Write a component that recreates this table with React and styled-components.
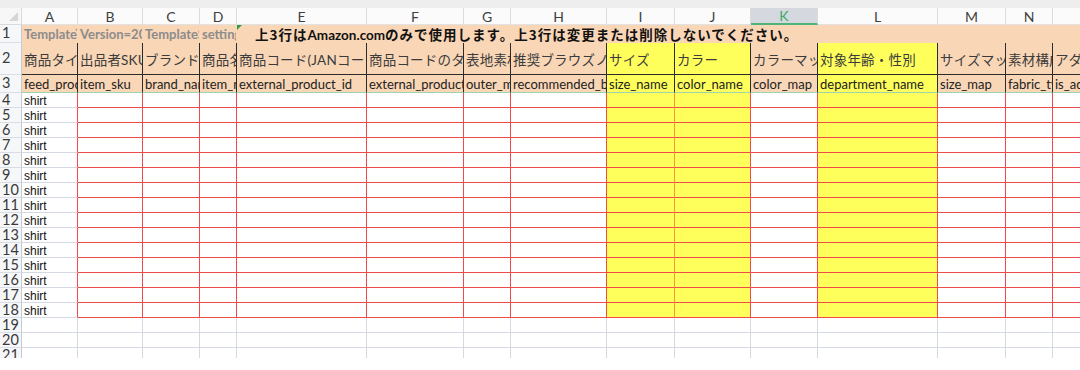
import React from 'react'
import styled, { createGlobalStyle, css } from 'styled-components'

const GlobalStyle = createGlobalStyle`
  html, body {
    margin: 0;
    padding: 0;
    background: #ffffff;
  }
`

const columns = [
  { key: 'A', width: 56, label: '商品タイプ', field: 'feed_product_type' },
  { key: 'B', width: 65, label: '出品者SKU', field: 'item_sku' },
  { key: 'C', width: 57, label: 'ブランド名', field: 'brand_name' },
  { key: 'D', width: 37, label: '商品名', field: 'item_name' },
  { key: 'E', width: 130, label: '商品コード(JANコード等)', field: 'external_product_id' },
  { key: 'F', width: 97, label: '商品コードのタイプ', field: 'external_product_id_type' },
  { key: 'G', width: 47, label: '表地素材', field: 'outer_material_type' },
  { key: 'H', width: 96, label: '推奨ブラウズノード', field: 'recommended_browse_nodes' },
  { key: 'I', width: 68, label: 'サイズ', field: 'size_name', yellow: true },
  { key: 'J', width: 76, label: 'カラー', field: 'color_name', yellow: true },
  { key: 'K', width: 67, label: 'カラーマップ', field: 'color_map' },
  { key: 'L', width: 120, label: '対象年齢・性別', field: 'department_name', yellow: true },
  { key: 'M', width: 68, label: 'サイズマップ', field: 'size_map' },
  { key: 'N', width: 47, label: '素材構成', field: 'fabric_type' },
  { key: 'O', width: 100, label: 'アダルト商品', field: 'is_adult_product' },
]

const metaTexts = [
  'TemplateType=fptcustom',
  'Version=2019.0101',
  'TemplateSignature=U0hJUlQ=',
  'settings=contentLanguageTag=ja_JP',
]

const dataRows = Array.from({ length: 15 }, (_, i) => i + 4)
const emptyRows = [19, 20, 21]

const gridLine = '#d5d9e3'
const redLine = '#ef4b4b'

const Screen = styled.div`
  height: 358px;
  overflow: hidden;
  background: #ffffff;
`

const TopStrip = styled.div`
  height: 8px;
  background: #eeeeee;
`

const Sheet = styled.div`
  display: grid;
  grid-template-columns: 22px ${columns.map((c) => `${c.width}px`).join(' ')};
  grid-template-rows: 17px 18px 32px 18px repeat(18, 15px);
  width: max-content;
`

const Corner = styled.div`
  position: relative;
  background: #f7f7f7;
  border-right: 1px solid #dadada;
  border-bottom: 1px solid #dadada;
  box-sizing: border-box;

  &::after {
    content: '';
    position: absolute;
    right: 3px;
    bottom: 3px;
    width: 0;
    height: 0;
    border-left: 9px solid transparent;
    border-bottom: 9px solid #d6d6d6;
  }
`

const ColHead = styled.div`
  box-sizing: border-box;
  display: flex;
  align-items: center;
  justify-content: center;
  font-family: 'Lato', 'Liberation Sans', sans-serif;
  font-size: 14px;
  color: #3f3f3f;
  background: #fbfbfb;
  border-right: 1px solid #dcdcdc;
  border-bottom: 1px solid #e2e2e2;

  ${({ $active }) =>
    $active &&
    css`
      background: #d5d8de;
      color: #3daa6a;
      border-bottom: 2px solid #4db47a;
    `}
`

const RowHead = styled.div`
  box-sizing: border-box;
  display: flex;
  align-items: center;
  padding-left: 2px;
  font-family: 'Lato', 'Liberation Sans', sans-serif;
  font-size: 14.5px;
  color: #3a3a3a;
  background: #f6f7f9;
  border-right: 1px solid #c4c9d3;
  border-bottom: 1px solid #d9dde5;
  overflow: hidden;
  line-height: 1;
`

const fills = {
  peach: '#f9d6b6',
  yellow: '#ffff5c',
  white: '#ffffff',
}

const Cell = styled.div`
  position: relative;
  box-sizing: border-box;
  display: flex;
  align-items: center;
  min-width: 0;
  overflow: hidden;
  white-space: nowrap;
  padding-left: 2px;
  background: ${({ $fill }) => fills[$fill || 'white']};
  border-right: 1px solid ${({ $right }) => $right || 'transparent'};
  border-bottom: 1px solid ${({ $bottom }) => $bottom || 'transparent'};
  grid-column: ${({ $span }) => ($span ? `span ${$span}` : 'auto')};
`

const MetaText = styled.span`
  font-family: 'Lato', 'Liberation Sans', sans-serif;
  font-weight: 700;
  font-size: 13px;
  color: #8c8c8c;
`

const NoticeCell = styled(Cell)`
  padding-left: 18px;

  &::before {
    content: '';
    position: absolute;
    left: 0;
    top: 0;
    border-top: 5px solid #2f9a4a;
    border-right: 5px solid transparent;
  }
`

const NoticeText = styled.span`
  font-family: 'Noto Sans CJK JP', sans-serif;
  font-weight: 700;
  font-size: 13.5px;
  letter-spacing: 1px;
  color: #111111;

  b {
    font-family: 'Lato', 'Noto Sans CJK JP', sans-serif;
    font-weight: 700;
    letter-spacing: 0;
  }
`

const LabelText = styled.span`
  font-family: 'Lato', 'Noto Sans CJK JP', sans-serif;
  font-size: 13.5px;
  font-weight: 400;
  color: #3b3b3b;
  letter-spacing: 0.2px;
`

const FieldText = styled.span`
  font-family: 'Lato', 'Liberation Sans', sans-serif;
  font-size: 13px;
  color: #222222;
`

const ValueText = styled.span`
  font-family: 'Liberation Sans', sans-serif;
  font-size: 12px;
  color: #111111;
  padding-top: 1px;
`

const labelFill = (col) => (col.yellow ? 'yellow' : 'peach')

const App = () => {
  return (
    <>
      <GlobalStyle />
      <Screen>
        <TopStrip />
        <Sheet>
          <Corner />
          {columns.map((col) => (
            <ColHead key={col.key} $active={col.key === 'K'}>
              {col.key}
            </ColHead>
          ))}

          <RowHead>1</RowHead>
          {metaTexts.map((text) => (
            <Cell key={text} $fill="peach">
              <MetaText>{text}</MetaText>
            </Cell>
          ))}
          <NoticeCell $fill="peach" $span={11}>
            <NoticeText>
              上3行は<b>Amazon.com</b>のみで使用します。上3行は変更または削除しないでください。
            </NoticeText>
          </NoticeCell>

          <RowHead>2</RowHead>
          {columns.map((col) => (
            <Cell key={col.key} $fill={labelFill(col)} $right="#2b2b2b" $bottom="#2b2b2b">
              <LabelText>{col.label}</LabelText>
            </Cell>
          ))}

          <RowHead>3</RowHead>
          {columns.map((col) => (
            <Cell key={col.key} $fill={labelFill(col)} $right="#2b2b2b" $bottom="#9ed3b0">
              <FieldText>{col.field}</FieldText>
            </Cell>
          ))}

          {dataRows.map((row) => (
            <React.Fragment key={row}>
              <RowHead>{row}</RowHead>
              {columns.map((col) => (
                <Cell
                  key={col.key}
                  $fill={col.yellow ? 'yellow' : 'white'}
                  $right={col.key === 'I' ? '#f39a3c' : redLine}
                  $bottom={col.key === 'A' ? gridLine : redLine}
                >
                  {col.key === 'A' && <ValueText>shirt</ValueText>}
                </Cell>
              ))}
            </React.Fragment>
          ))}

          {emptyRows.map((row) => (
            <React.Fragment key={row}>
              <RowHead>{row}</RowHead>
              {columns.map((col) => (
                <Cell key={col.key} $right={gridLine} $bottom={gridLine} />
              ))}
            </React.Fragment>
          ))}
        </Sheet>
      </Screen>
    </>
  )
}

export default App
